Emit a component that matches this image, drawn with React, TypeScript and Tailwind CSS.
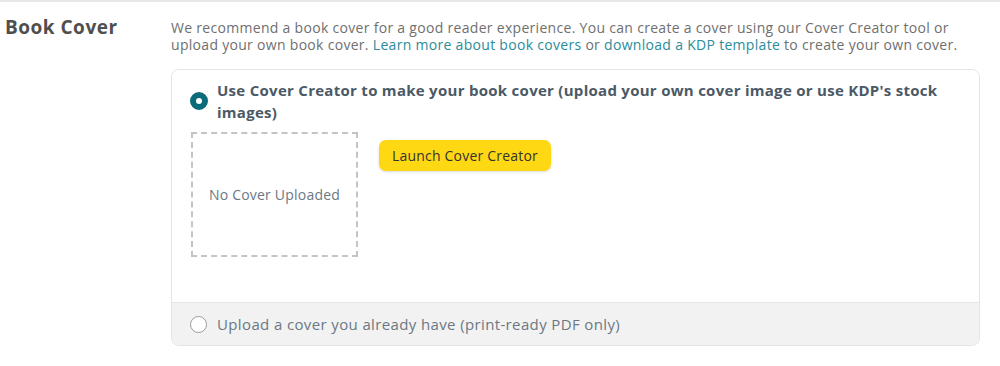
import React from "react";

export default function App() {
  const font = { fontFamily: '"Open Sans", "Noto Sans", sans-serif' };
  return (
    <div
      className="w-[1000px] h-[366px] bg-white border-t-[2px] border-[#e8e8e8] flex overflow-hidden"
      style={font}
    >
      <div className="w-[171px] shrink-0 pl-[5px] pt-[13px]">
        <h2 className="text-[19px] leading-[24px] font-bold text-[#4f4f4f] tracking-[0.5px]">Book Cover</h2>
      </div>
      <div className="w-[809px] shrink-0">
        <p className="pt-[17px] text-[14px] leading-[17px] text-[#6f6f6f] tracking-[0.3px]">
          We recommend a book cover for a good reader experience. You can create a cover using our Cover Creator tool or
          <br />
          upload your own book cover.{" "}
          <span className="text-[#2b8c9b]">Learn more about book covers</span> or{" "}
          <span className="text-[#2b8c9b]">download a KDP template</span> to create your own cover.
        </p>
        <div className="mt-[16px] h-[277px] rounded-[8px] border border-[#e4e4e4] flex flex-col overflow-hidden">
          <div className="flex-1 bg-white pl-[18px] pr-[20px] pt-[9px]">
            <div className="flex gap-[9px]">
              <div className="mt-[13px] w-[18px] h-[18px] rounded-full border-[6px] border-[#0b6c79] bg-white shrink-0" />
              <div className="text-[15px] leading-[22px] font-bold text-[#4b5966] tracking-[0.28px]">
                Use Cover Creator to make your book cover (upload your own cover image or use KDP's stock images)
              </div>
            </div>
            <div className="flex mt-[9px] ml-[1px]">
              <div className="w-[167px] h-[125px] border-2 border-dashed border-[#c4c4c4] flex items-center justify-center">
                <span className="text-[14px] text-[#6c7884] tracking-[0.2px]">No Cover Uploaded</span>
              </div>
              <div className="ml-[21px] mt-[8px]">
                <button className="w-[172px] h-[31px] rounded-[7px] bg-[#ffd814] text-[14px] text-[#333] tracking-[0.2px] shadow-[0_1px_3px_rgba(0,0,0,0.15)]">
                  Launch Cover Creator
                </button>
              </div>
            </div>
          </div>
          <div className="h-[43px] shrink-0 bg-[#f2f2f2] border-t border-[#e6e6e6] flex items-center pl-[18px] gap-[10px]">
            <div className="w-[17px] h-[17px] rounded-full border-[1.5px] border-[#9a9a9a] bg-white shrink-0" />
            <span className="text-[15px] text-[#6b7884] tracking-[0.37px]">Upload a cover you already have (print-ready PDF only)</span>
          </div>
        </div>
      </div>
    </div>
  );
}
